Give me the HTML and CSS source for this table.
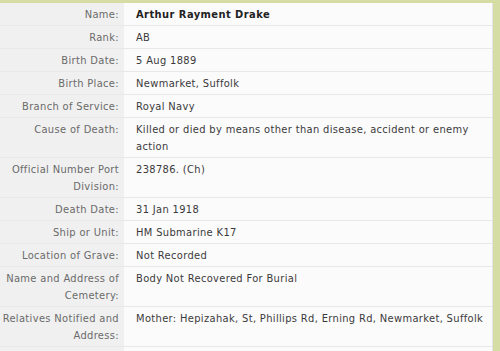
FILE: index.html
```html
<!DOCTYPE html>
<html>
<head>
<meta charset="utf-8">
<link rel="stylesheet" href="styles.css">
</head>
<body>
<div class="panel">
<table class="record">
<tr><td class="label">Name:</td><td class="value strong">Arthur Rayment Drake</td></tr>
<tr><td class="label">Rank:</td><td class="value">AB</td></tr>
<tr><td class="label">Birth Date:</td><td class="value">5 Aug 1889</td></tr>
<tr><td class="label">Birth Place:</td><td class="value">Newmarket, Suffolk</td></tr>
<tr><td class="label">Branch of Service:</td><td class="value">Royal Navy</td></tr>
<tr><td class="label">Cause of Death:</td><td class="value">Killed or died by means other than disease, accident or enemy action</td></tr>
<tr><td class="label">Official Number Port Division:</td><td class="value">238786. (Ch)</td></tr>
<tr><td class="label">Death Date:</td><td class="value">31 Jan 1918</td></tr>
<tr><td class="label">Ship or Unit:</td><td class="value">HM Submarine K17</td></tr>
<tr><td class="label">Location of Grave:</td><td class="value">Not Recorded</td></tr>
<tr><td class="label">Name and Address of Cemetery:</td><td class="value">Body Not Recovered For Burial</td></tr>
<tr><td class="label">Relatives Notified and Address:</td><td class="value">Mother: Hepizahak, St, Phillips Rd, Erning Rd, Newmarket, Suffolk</td></tr>
<tr><td class="label">&nbsp;</td><td class="value">&nbsp;</td></tr>
</table>
</div>
</body>
</html>
```
FILE: styles.css
```css
html, body {
  margin: 0;
  padding: 0;
  background: #d5dda5;
  overflow: hidden;
}
.panel {
  margin: 3px 7px 0 0;
  border-right: 1px solid #e4e4ec;
  background: #fcfbfc;
}
.record {
  width: 100%;
  border-collapse: collapse;
  font-family: "DejaVu Sans Condensed", "DejaVu Sans", Verdana, sans-serif;
  font-size: 11px;
  letter-spacing: 0.35px;
  line-height: 17px;
}
.record td {
  vertical-align: top;
  border-bottom: 1px solid #e8e8ea;
  padding: 3px 0 2px 0;
}
.label {
  width: 119px;
  padding-right: 5px !important;
  text-align: right;
  color: #6a6a6a;
  background: #f0f0f0;
}
.value {
  padding-left: 12px !important;
  color: #3a3a3a;
}
.strong {
  font-weight: bold;
  letter-spacing: 0.45px;
  color: #222;
}
```
